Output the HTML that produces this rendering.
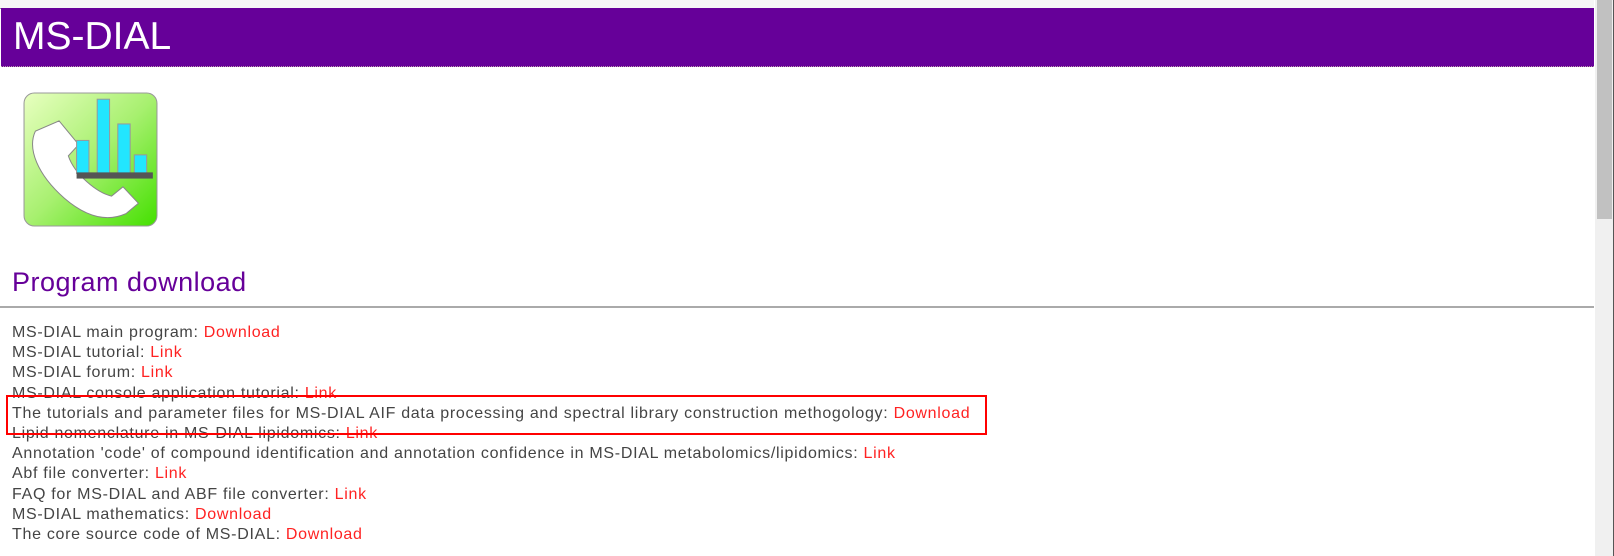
<!DOCTYPE html>
<html><head><style>
body{margin:0;width:1614px;height:556px;background:#fff;position:relative;overflow:hidden;font-family:"Liberation Sans",sans-serif}
.top{position:absolute;left:0;top:0;width:1594px;height:8px;background:#f6f6f6;border-bottom:1px dotted #999}
.bar{position:absolute;left:1px;top:8px;width:1593px;height:58px;background:#660099;border-bottom:1px dotted #b9a}
.bar span{position:absolute;left:12px;top:7px;color:#fff;font-size:39px;letter-spacing:0px}
.sb{position:absolute;left:1595px;top:0;width:18px;height:556px;background:#f0f0f0}
.thumb{position:absolute;left:1597px;top:0;width:15px;height:219px;background:#c1c1c1}
.edge{position:absolute;left:1613px;top:0;width:1px;height:556px;background:#555}
h2{position:absolute;left:12px;top:267px;margin:0;font-weight:normal;color:#660099;font-size:27px;letter-spacing:0.5px}
.hr{position:absolute;left:0;top:306px;width:1594px;height:2px;background:#aaa}
.list{position:absolute;left:12px;top:323px;color:#444;font-size:16px;line-height:20.2px;letter-spacing:0.7px}
.list a{color:#f22;text-decoration:none}
.box{position:absolute;left:6px;top:395px;width:977px;height:36px;border:2px solid #f00}
</style></head><body>
<div class="top"></div>
<div class="bar"><span>MS-DIAL</span></div>
<div class="sb"></div><div class="thumb"></div><div class="edge"></div>
<svg style="position:absolute;left:23px;top:92px" width="135" height="135" viewBox="0 0 131 131">
<defs><linearGradient id="g" x1="0" y1="0" x2="1" y2="1"><stop offset="0" stop-color="#e8ffc0"/><stop offset="0.5" stop-color="#a8f070"/><stop offset="1" stop-color="#44e000"/></linearGradient></defs>
<rect x="1" y="1" width="129" height="129" rx="10" fill="url(#g)" stroke="#999"/>
<path d="M12 38 C4 55 14 80 40 103 C62 122 82 126 100 118 L112 108 L97 92 L86 101 C72 98 50 80 44 62 L54 51 L35 28 Z" fill="#fff" stroke="#888"/>
<rect x="52" y="47" width="12" height="32" fill="#22e6ff" stroke="#999"/>
<rect x="72" y="7" width="12" height="72" fill="#22e6ff" stroke="#999"/>
<rect x="92" y="31" width="12" height="48" fill="#22e6ff" stroke="#999"/>
<rect x="108" y="61" width="12" height="18" fill="#22e6ff" stroke="#999"/>
<rect x="52" y="78" width="74" height="6" fill="#555"/>
</svg>
<h2>Program download</h2>
<div class="hr"></div>
<div class="list">
MS-DIAL main program: <a>Download</a><br>
MS-DIAL tutorial: <a>Link</a><br>
MS-DIAL forum: <a>Link</a><br>
MS-DIAL console application tutorial: <a>Link</a><br>
The tutorials and parameter files for MS-DIAL AIF data processing and spectral library construction methogology: <a>Download</a><br>
Lipid nomenclature in MS-DIAL lipidomics: <a>Link</a><br>
Annotation 'code' of compound identification and annotation confidence in MS-DIAL metabolomics/lipidomics: <a>Link</a><br>
Abf file converter: <a>Link</a><br>
FAQ for MS-DIAL and ABF file converter: <a>Link</a><br>
MS-DIAL mathematics: <a>Download</a><br>
The core source code of MS-DIAL: <a>Download</a>
</div>
<div class="box"></div>
</body></html>
